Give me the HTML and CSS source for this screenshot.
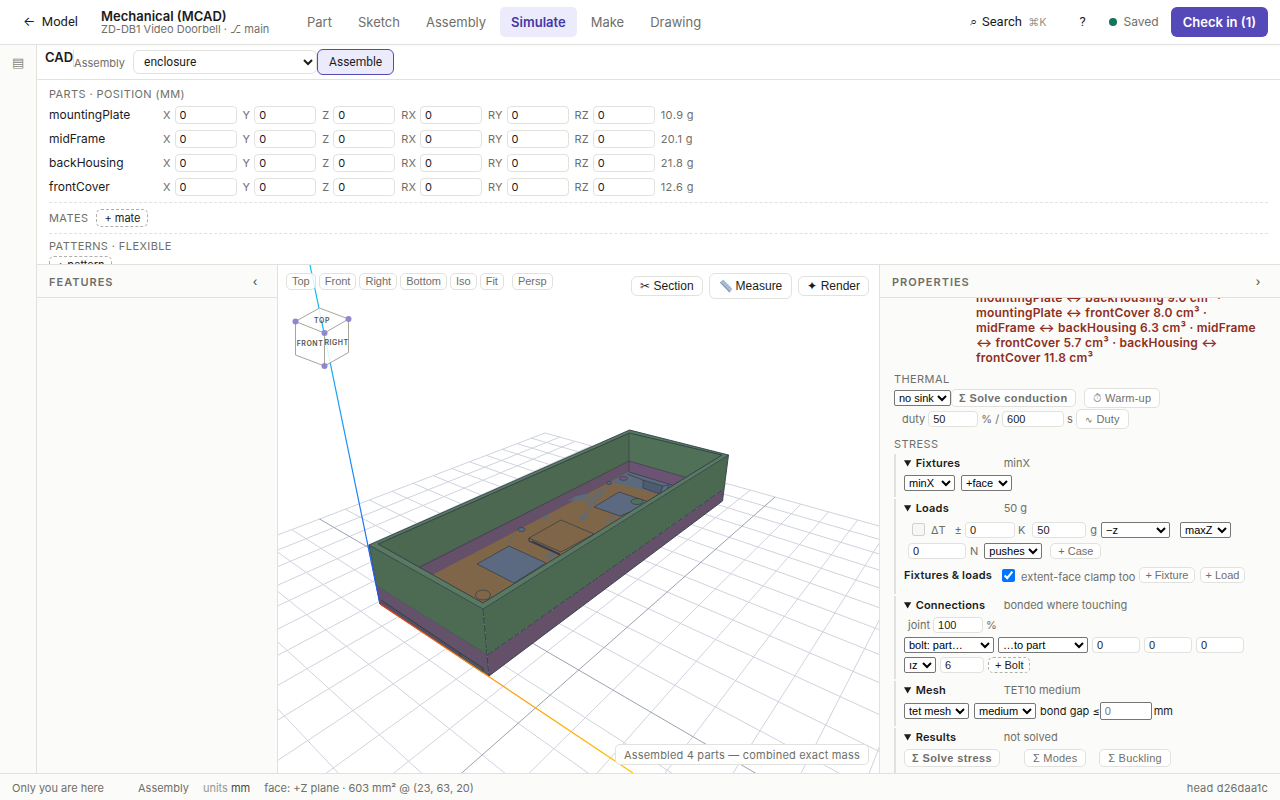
FILE: index.html
```html
<!DOCTYPE html>
<html lang="en">
<head>
<meta charset="utf-8">
<title>Mechanical (MCAD)</title>
<link rel="stylesheet" href="styles.css">
</head>
<body>
<div class="app">
  <header class="topbar">
    <button class="back" type="button">← &nbsp;Model</button>
    <div class="title">
      <strong>Mechanical (MCAD)</strong>
      <span>ZD-DB1 Video Doorbell · ⎇ main</span>
    </div>
    <nav class="tabs">
      <a href="#part">Part</a>
      <a href="#sketch">Sketch</a>
      <a href="#assembly">Assembly</a>
      <a href="#simulate" class="active">Simulate</a>
      <a href="#make">Make</a>
      <a href="#drawing">Drawing</a>
    </nav>
    <div class="actions">
      <button class="search" type="button"><span>⌕</span> Search <kbd>⌘K</kbd></button>
      <button class="help" type="button">?</button>
      <span class="saved">Saved</span>
      <button class="checkin" type="button">Check in (1)</button>
    </div>
  </header>

  <div class="body">
    <aside class="rail"><button type="button" aria-label="Panels">▤</button></aside>
    <main class="work">
      <div class="toolbar">
        <strong>CAD</strong>
        <label for="asm">Assembly</label>
        <select id="asm"><option>enclosure</option></select>
        <button type="button">Assemble</button>
      </div>

      <section class="assembly">
        <h2>Parts · position (mm)</h2>
        <div class="parts" id="parts"></div>
        <div class="mates"><h2>Mates</h2><button class="dashed" type="button">+ mate</button></div>
        <div class="patterns"><h2>Patterns · flexible</h2><button class="dashed" type="button">+ pattern</button></div>
      </section>

      <div class="panes">
        <section class="features">
          <div class="panehead"><h2>Features</h2><button type="button" aria-label="Collapse features">‹</button></div>
        </section>

        <section class="viewport">
          <svg class="scene" viewBox="278 265 601 508" preserveAspectRatio="xMidYMid slice" role="img" aria-label="Enclosure assembly">
            <defs>
              <linearGradient id="zaxis" gradientUnits="userSpaceOnUse" x1="310" y1="265" x2="380" y2="604">
                <stop offset="0" stop-color="#00c8f4"/><stop offset="0.5" stop-color="#1496fa"/><stop offset="1" stop-color="#2a55f0"/>
              </linearGradient>
              <linearGradient id="xaxis" gradientUnits="userSpaceOnUse" x1="380" y1="604" x2="633" y2="773">
                <stop offset="0" stop-color="#f03a1c"/><stop offset="0.45" stop-color="#ff9a10"/><stop offset="1" stop-color="#ffc400"/>
              </linearGradient>
            </defs>
            <g id="grid"></g>
            <path d="M310 265 380 604" stroke="url(#zaxis)" stroke-width="1.2"/>
            <g stroke-linejoin="round">
              <path fill="#806648" d="M374 545 629 431 725 455 483 606z"/>
              <path fill="#4c6850" d="M374 545 629 432 629 461 420 567 410 566z"/>
              <path fill="#507058" d="M629 432 725 455 685 480 629 461z"/>
              <path fill="#645069" d="M416 568 420 566 629 461 629 472 434 574 430 576z"/>
              <path fill="#6c5273" d="M629 461 687 478 671 488 629 472z"/>
              <path fill="#5b6a7d" d="M611 482 628 472 672 485 663 495z"/>
              <path fill="#5b6a7d" d="M568 501 576 496 590 493 583 500zM578 520 589 509 585 520zM540 518 549 515 547 519zM546 556 552 553 557 555 548 559z"/>
              <path fill="#6b6963" d="M583 500 610 484 602 497 590 509zM507 545 515 530 512 541zM604 521 618 514 612 522z"/>
              <g stroke="#303b48" stroke-width=".7">
                <path fill="#5b6a80" d="M477 564 509 546 546 563 514 583z"/>
                <path fill="#5b6a80" d="M594 507 619 492 652 503 620 516z"/>
                <path fill="#806648" d="M529 538 561 520 594 534 561 552z"/>
                <path fill="none" d="M529 538v3l31 14M532 541l28 13" stroke-width="1.1"/>
                <path fill="#4e5c72" d="M643 480 663 486 660 494 643 488z"/>
                <path fill="#5e6c82" d="M663 486 669 485 666 492 660 494z"/>
                <path fill="none" d="M629 472 672 485M627 474 643 480"/>
                <ellipse cx="483" cy="595" rx="7.5" ry="5" fill="none"/>
                <ellipse cx="521.500" cy="529.500" rx="3.500" ry="2" fill="#5b6a80"/>
                <ellipse cx="609" cy="483" rx="2.500" ry="1.500" fill="#5b6a80"/>
                <ellipse cx="623.500" cy="478.500" rx="4" ry="1.800" fill="#77567f"/>
                <ellipse cx="637" cy="501.500" rx="6" ry="3" fill="#507058"/>
              </g>
              <path fill="none" stroke="#28333c" stroke-width=".7" stroke-opacity=".7" d="M629 433V472M420 567 629 461 685 477"/>
              <path fill="#4d6a52" d="M369 545 483 609 487.500 655 377 586z"/>
              <path fill="#4b6850" d="M483 609 728.500 455 724 489 487.500 655z"/>
              <path fill="#63526a" d="M377 586 487.500 655 489 676 380 604z"/>
              <path fill="#655069" d="M487.500 655 724 489 722.500 501 489 676z"/>
              <path fill="#564f64" d="M381 600 460 653 483 668 483 673 380 604z"/>
              <path fill="#4d5864" d="M460 653 483 668 483 673 460 658z"/>
              <path fill="#597a61" fill-rule="evenodd" d="M369 545 629.500 430 728.500 455 483 609zM378 544 483 603 722 455 629.500 433z"/>
              <g fill="none" stroke="#2f3d48" stroke-width=".9">
                <path d="M369 545 629.500 430 728.500 455 483 609z"/>
                <path d="M378 544 483 603 722 455 629.500 433z"/>
                <path d="M369 545 380 604 489 676 722.500 501 728.500 455M381 600 460 653V658M460 653 483 668V673"/>
                <path d="M377 586 487.500 655" stroke-width=".6"/>
                <path d="M483 609 489 676M487.500 655 724 489" stroke-dasharray="7 1"/>
              </g>
            </g>
            <path d="M368 545 380 604" stroke="url(#zaxis)" stroke-width="1"/>
            <path d="M380 604 633 773" stroke="url(#xaxis)" stroke-width="1.300"/>
            <g class="cube">
              <path fill="#fff" fill-opacity=".85" stroke="#a5a59d" stroke-width="1" stroke-linejoin="round" d="M295.500 321.500 319.500 308 348.500 319V352.500L324.500 366 295.500 355zM295.500 321.500 324.500 333 348.500 319M324.500 333V366"/>
              <g fill="#9087cf"><circle cx="295.500" cy="321.500" r="3"/><circle cx="348.500" cy="319" r="3"/><circle cx="324.500" cy="333" r="3"/><circle cx="324.500" cy="366" r="3"/></g>
              <text x="322" y="323">TOP</text><text x="310" y="346">FRONT</text><text x="336.500" y="345">RIGHT</text>
            </g>
          </svg>
          <div class="views">
            <button type="button">Top</button><button type="button">Front</button><button type="button">Right</button><button type="button">Bottom</button><button type="button">Iso</button><button type="button">Fit</button><button type="button" class="persp">Persp</button>
          </div>
          <div class="tools">
            <button type="button">✂ Section</button>
            <button type="button" class="measure"><svg width="14" height="14" viewBox="0 0 14 14" aria-hidden="true"><path d="M1 3.500 4 .5 13.500 10 10.500 13.500z" fill="#a9c0d8"/><path d="M1 3.500 10.500 13.500 11.300 12.500 1.800 2.700z" fill="#8299b2"/><path d="M5 1.600 4 2.700M7 3.500 6 4.600M9 5.500 8 6.600M11 7.500 10 8.600" stroke="#6f87a3" stroke-width=".7"/></svg> Measure</button>
            <button type="button">✦ Render</button>
          </div>
          <div class="toast">Assembled 4 parts — combined exact mass</div>
        </section>

        <section class="props">
          <div class="panehead"><h2>Properties</h2><button type="button" aria-label="Collapse properties">›</button></div>
          <div class="scroll">
            <p class="clash">mountingPlate ↔ backHousing 9.0 cm³ · mountingPlate ↔ frontCover 8.0 cm³ · midFrame ↔ backHousing 6.3 cm³ · midFrame ↔ frontCover 5.7 cm³ · backHousing ↔ frontCover 11.8 cm³</p>
            <h3>Thermal</h3>
            <div class="row thermal">
              <select aria-label="Heat sink" class="w57"><option>no sink</option></select>
              <button class="pill strong" type="button">Σ Solve conduction</button>
              <button class="pill tall gap8" type="button"><i>⏱</i> Warm-up</button>
            </div>
            <div class="row duty">
              <label for="duty">duty</label><input id="duty" class="w50" value="50"><label for="secs">% /</label><input id="secs" class="w62" value="600"><span>s</span>
              <button class="pill tall" type="button"><small>∿</small> Duty</button>
            </div>
            <h3 class="stress">Stress</h3>

            <details open>
              <summary><b>Fixtures</b><span>minX</span></summary>
              <div class="row h21 g6">
                <select aria-label="Fixture face" class="w51"><option>minX</option></select>
                <select aria-label="Add face" class="w51"><option>+face</option></select>
              </div>
            </details>

            <details open>
              <summary><b>Loads</b><span>50 g</span></summary>
              <div class="row h25">
                <input id="dt" type="checkbox" class="off" disabled><label for="dt" class="dt">ΔT</label>
                <label for="pm" class="pm">±</label><input id="pm" class="w50" value="0"><span>K</span>
                <input aria-label="Acceleration" class="w54 gap4" value="50"><span class="gee">g</span>
                <select aria-label="Direction" class="w69"><option>−z</option></select>
                <select aria-label="Load face" class="w51 gap10"><option>maxZ</option></select>
              </div>
              <div class="row h18">
                <input aria-label="Force" class="w58 gap4" value="0"><span class="newton">N</span>
                <select aria-label="Force direction" class="w58"><option>pushes</option></select>
                <button class="pill gap8" type="button">+ Case</button>
              </div>
              <div class="row h30">
                <b>Fixtures &amp; loads</b>
                <input id="clamp" type="checkbox" checked class="on"><label for="clamp" class="low">extent-face clamp too</label>
                <button class="pill tiny" type="button">+ Fixture</button>
                <button class="pill tiny gap6" type="button">+ Load</button>
              </div>
            </details>

            <details open>
              <summary><b>Connections</b><span>bonded where touching</span></summary>
              <div class="row h21"><label for="joint" class="gap4">joint</label><input id="joint" class="w50" value="100"><span>%</span></div>
              <div class="row h20 g4">
                <select aria-label="Bolt part" class="w90"><option>bolt: part…</option></select>
                <select aria-label="To part" class="w90"><option>…to part</option></select>
                <input aria-label="Bolt x" class="w48" value="0"><input aria-label="Bolt y" class="w48" value="0"><input aria-label="Bolt z" class="w48" value="0">
              </div>
              <div class="row h20 g4">
                <select aria-label="Bolt axis" class="w32"><option>ız</option></select>
                <input aria-label="Bolt diameter" class="w44" value="6">
                <button class="pill bolt" type="button">+ Bolt</button>
              </div>
            </details>

            <details open>
              <summary><b>Mesh</b><span>TET10 medium</span></summary>
              <div class="row h23 mesh">
                <select aria-label="Mesh type" class="w65"><option>tet mesh</option></select>
                <select aria-label="Mesh density" class="w62 gap6"><option>medium</option></select>
                <label for="gap" class="dark bond">bond gap ≤</label><input id="gap" class="raw" placeholder="0"><span class="dark">mm</span>
              </div>
            </details>

            <details open>
              <summary><b>Results</b><span>not solved</span></summary>
              <div class="row h23 results">
                <button class="pill strong" type="button">Σ Solve stress</button>
                <button class="pill modes" type="button">Σ Modes</button>
                <button class="pill buckle" type="button">Σ Buckling</button>
              </div>
            </details>
          </div>
        </section>
      </div>
    </main>
  </div>

  <footer class="status">
    <span class="who">Only you are here</span>
    <span class="ctx">Assembly</span>
    <span class="unit">units <b>mm</b></span>
    <span>face: +Z plane · 603 mm² @ (23, 63, 20)</span>
    <span class="head">head d26daa1c</span>
  </footer>
</div>
<script src="app.js"></script>
</body>
</html>
```
FILE: app.js
```js
// Part position rows
const parts = [["mountingPlate", "10.9"], ["midFrame", "20.1"], ["backHousing", "21.8"], ["frontCover", "12.6"]];
const axes = ["X", "Y", "Z", "RX", "RY", "RZ"];
document.getElementById("parts").innerHTML = parts.map(([name, mass]) =>
  `<div class="part"><span class="name">${name}</span>` +
  axes.map(a => `<label for="${name}-${a}">${a}</label><input id="${name}-${a}" value="0">`).join("") +
  `<span class="mass">${mass} g</span></div>`).join("");

// Ground grid, projected in perspective; u and v run from -1 to 1
const project = (u, v) => {
  const w = -0.5304 * u + 0.6465 * v + 1;
  return { w, x: (89.6 * u + 697.4 * v + 578.6) / w, y: (-124.3 * u + 148.3 * v + 670) / w };
};
const N = 12;
let out = "";
const line = (from, to, major) => {
  const pts = [];
  for (let i = 0; i <= 200; i++) {
    const t = i / 200;
    const p = project(from[0] + (to[0] - from[0]) * t, from[1] + (to[1] - from[1]) * t);
    if (p.w > 0.15) pts.push(p);
  }
  if (pts.length < 2) return;
  const a = pts[0], b = pts[pts.length - 1];
  out += `<line x1="${a.x.toFixed(1)}" y1="${a.y.toFixed(1)}" x2="${b.x.toFixed(1)}" y2="${b.y.toFixed(1)}" class="${major ? "major" : "minor"}"/>`;
};
for (let pass = 0; pass < 2; pass++) {
  for (let i = -N; i <= N; i++) {
    if ((i === 0) !== (pass === 1)) continue;
    line([i / N, -1], [i / N, 1], i === 0);
    line([-1, i / N], [1, i / N], i === 0);
  }
}
document.getElementById("grid").innerHTML = out;
```
FILE: styles.css
```css
* { box-sizing: border-box; }
html, body { height: 100%; }
body { margin: 0; font: 12px/16px Inter, "Liberation Sans", sans-serif; color: #1b1b1a; background: #fff; }
button, input, select { font: inherit; color: inherit; margin: 0; }
button { cursor: pointer; }
h2, h3, p { margin: 0; font-weight: 400; }
h2, h3 { font-size: 11px; line-height: 16px; letter-spacing: .4px; text-transform: uppercase; color: #6f6f69; }
.app { display: flex; flex-direction: column; height: 100vh; overflow: hidden; }

.topbar { display: flex; align-items: center; height: 45px; flex: none; padding: 0 12px; border-bottom: 1px solid #e1e1dd; box-shadow: 0 1px 2px rgba(0,0,0,.04); }
.back, .search, .help { border: 0; background: none; padding: 0; font-family: Roboto, Inter, sans-serif; font-size: 13px; }
.back { width: 77px; padding-left: 11px; text-align: left; white-space: nowrap; }
.title { width: 194px; margin-left: 12px; display: flex; flex-direction: column; }
.title strong { font-size: 13px; line-height: 14px; font-weight: 600; }
.title span { font-size: 11px; line-height: 13px; color: #6f6f69; }
.tabs { display: flex; gap: 2px; }
.tabs a { padding: 7px 12px; font-size: 13px; color: #6f6f69; text-decoration: none; border-radius: 5px; }
.tabs .active { background: #ecebfb; color: #4338a8; font-weight: 600; padding: 7px 11px; }
.actions { display: flex; align-items: center; margin-left: auto; }
.search span { margin-right: 2px; }
kbd { font: 11px Inter, sans-serif; color: #96968f; margin-left: 3px; }
.help { width: 32px; margin: 0 10px 0 20px; }
.saved { display: flex; align-items: center; gap: 7px; color: #6f6f69; margin-right: 12px; }
.saved::before { content: ""; width: 8px; height: 8px; border-radius: 50%; background: #12745a; }
.checkin { height: 30px; padding: 0 12px; border: 0; border-radius: 6px; background: #5548b8; color: #fff; font-size: 13px; font-weight: 600; }

.body { display: flex; flex: 1; min-height: 0; }
.rail { width: 37px; flex: none; background: #fbfbf9; border-right: 1px solid #e1e1dd; text-align: center; padding-top: 9px; }
.rail button { border: 0; padding: 0; background: none; color: #85857f; font-size: 13px; }
.work { flex: 1; min-width: 0; display: flex; flex-direction: column; }
.toolbar { display: flex; height: 35px; flex: none; padding: 4px 8px; border-bottom: 1px solid #e1e1dd; }
.toolbar strong { font-size: 13px; line-height: 17px; height: 18px; font-weight: 600; border-right: 1px solid #e1e1dd; }
.toolbar label { font-size: 11px; line-height: 28px; color: #6f6f69; width: 59px; }
.toolbar select { width: 184px; height: 24px; margin-top: 1px; padding: 0 6px; border: 1px solid #e1e1dd; border-radius: 6px; background: #fff; font: 12px Roboto, sans-serif; }
.toolbar button { height: 26px; padding: 0 11px; border: 1px solid #5548b8; border-radius: 6px; background: #ecebfb; font: 12px Roboto, sans-serif; }

.assembly { height: 185px; flex: none; overflow: hidden; padding: 6px 12px 0; border-bottom: 1px solid #e1e1dd; }
.part { display: flex; align-items: center; height: 24px; }
.part .name { width: 114px; }
.part label { font-size: 11px; color: #6f6f69; letter-spacing: .1px; margin-right: 4px; }
.part input { width: 62px; height: 18px; padding: 0 4px; margin-right: 6px; border: 1px solid #e1e1dd; border-radius: 4px; font-size: 11px; background: #fff; }
.mass { font-size: 11px; color: #6f6f69; letter-spacing: .4px; }
.parts { padding: 1px 0 3px; }
.mates { display: flex; align-items: center; gap: 8px; height: 31px; border-top: 1px dashed #e1e1dd; }
.patterns { border-top: 1px dashed #e1e1dd; padding-top: 4px; }
.dashed { display: block; height: 18px; padding: 0 7px; border: 1px dashed #b0b0a8; border-radius: 5px; background: #fff; font-size: 11px; line-height: 14px; }
.patterns .dashed { margin-top: 2px; }

.panes { display: grid; grid-template-columns: 241px minmax(0, 1fr) 401px; flex: 1; min-height: 0; }
.features { background: #fbfbf9; border-right: 1px solid #e1e1dd; }
.panehead { display: flex; align-items: center; justify-content: space-between; height: 33px; flex: none; padding: 2px 12px 0; border-bottom: 1px solid #e1e1dd; }
.panehead h2 { font-weight: 600; letter-spacing: 1px; }
.panehead button { border: 0; padding: 0; width: 20px; background: none; color: #4a4a46; }

.viewport { position: relative; overflow: hidden; }
.scene { position: absolute; inset: 0; width: 100%; height: 100%; }
.minor { stroke: #cfd3de; stroke-width: 1; }
.major { stroke: #9aa1b0; stroke-width: 1; }
.cube text { font: 600 7px Inter, sans-serif; letter-spacing: .5px; fill: #55554f; text-anchor: middle; }
.views { position: absolute; top: 8px; left: 8px; display: flex; gap: 3px; }
.views button { height: 17px; padding: 0 5px; border: 1px solid #e1e1dd; border-radius: 5px; background: rgba(255,255,255,.85); color: #6f6f69; font: 11px/15px "Liberation Sans", sans-serif; }
.views .persp { margin-left: 5px; }
.tools { position: absolute; top: 8px; right: 10px; display: flex; align-items: center; gap: 6px; }
.tools button { height: 20px; padding: 0 9px; border: 1px solid #e1e1dd; border-radius: 6px; background: #fff; font: 12px/16px "Liberation Sans", sans-serif; }
.tools button:not(.measure) { padding: 0 8px; }
.tools .measure { height: 26px; display: flex; align-items: center; gap: 3px; }
.toast { position: absolute; right: 10px; bottom: 8px; height: 21px; padding: 0 8px; border: 1px solid #e1e1dd; border-radius: 5px; background: rgba(255,255,255,.92); color: #6f6f69; font-size: 11px; line-height: 20px; letter-spacing: .2px; }

.props { display: flex; flex-direction: column; min-height: 0; background: #fbfbf9; border-left: 1px solid #e1e1dd; }
.scroll { flex: 1; min-height: 0; overflow: hidden; padding: 0 14px; font-size: 11px; color: #6f6f69; }
.clash { margin: -8px 0 0 82px; width: 290px; color: #8f2f1c; font-size: 12px; line-height: 15px; font-weight: 600; letter-spacing: .2px; }
.scroll h3 { margin-top: 6px; }
.scroll h3.stress { margin-top: 7px; margin-bottom: 2px; }
.row { display: flex; align-items: center; white-space: nowrap; }
.row select { height: 16px; padding: 0; border: 1px solid #767676; border-radius: 2px; background: #fff; color: #000; font: 11px "Liberation Sans", sans-serif; }
.row input { height: 16px; padding: 0 4px; border: 1px solid #e1e1dd; border-radius: 4px; background: #fff; color: #1b1b1a; font: 11px "Liberation Sans", sans-serif; }
.row b, summary b { font-weight: 600; color: #1b1b1a; letter-spacing: .2px; }
.pill { height: 16px; padding: 0 7px; border: 1px solid #e1e1dd; border-radius: 5px; background: #fff; color: #6f6f69; font: 11px/14px "Liberation Sans", sans-serif; }
.pill i { font-style: normal; opacity: .7; }
.pill.strong { height: 18px; font-weight: 700; letter-spacing: .4px; }
.pill.tall { height: 20px; padding: 0 8px; letter-spacing: .2px; }
.pill.tiny { padding: 0 5px; }
.thermal { height: 22px; }
.duty { height: 20px; padding-left: 8px; gap: 3px; }
details { border-left: 2px solid #e1e1dd; padding: 0 0 4px 8px; margin-bottom: 2px; }
summary { height: 18px; line-height: 18px; }
summary::marker { color: #1b1b1a; }
summary b { display: inline-block; width: 88px; }
.row label, .row span { margin: 0 3px; }
.duty label, .duty span { margin: 0; }
.h18 { height: 18px; } .h20 { height: 20px; } .h21 { height: 21px; } .h23 { height: 23px; } .h25 { height: 25px; } .h30 { height: 30px; }
.g4 { gap: 4px; } .g6 { gap: 6px; }
.w32 { width: 32px; } .w44 { width: 44px; } .w48 { width: 48px; } .w50 { width: 50px; } .w51 { width: 51px; } .w54 { width: 54px; } .w57 { width: 57px; } .w58 { width: 58px; } .w62 { width: 62px; } .w65 { width: 65px; } .w69 { width: 69px; } .w90 { width: 90px; }
.row .gap4 { margin-left: 4px; } .row .gap6 { margin-left: 5px; } .row .gap8 { margin-left: 8px; } .row .gap10 { margin-left: 10px; }
.row input[type=checkbox] { width: 13px; height: 13px; padding: 0; }
.row .off { margin-left: 8px; }
.row .dt { margin: 0 6px; } .row .gee { margin: 0 4px; } .row .newton { margin: 0 6px 0 4px; }
.row .on { margin: 0 6px 0 10px; }
.row .low { margin: 4px 4px 0 0; }
.row .dark { color: #1b1b1a; margin: 0 2px; }
.row .bond { margin: 0 0 0 4px; }
.row .raw { width: 52px; height: 18px; border: 1px solid #767676; border-radius: 2px; }
.pill.bolt { border: 1px dashed #b0b0a8; color: #1b1b1a; padding: 0 6px; }
.pill.modes { margin-left: 24px; padding: 0 8px; height: 18px; letter-spacing: .2px; }
.pill.buckle { margin-left: 13px; padding: 0 8px; height: 18px; letter-spacing: .2px; }

.status { display: flex; align-items: center; height: 27px; flex: none; padding: 2px 12px 0; border-top: 1px solid #e1e1dd; background: #fbfbf9; color: #6f6f69; font-size: 11px; z-index: 1; }
.who { margin-right: 34px; }
.ctx, .unit { margin-right: 14px; }
.unit { color: #96968f; }
.unit b { font-weight: 400; color: #4a4a46; }
.head { margin-left: auto; letter-spacing: .2px; }
```
